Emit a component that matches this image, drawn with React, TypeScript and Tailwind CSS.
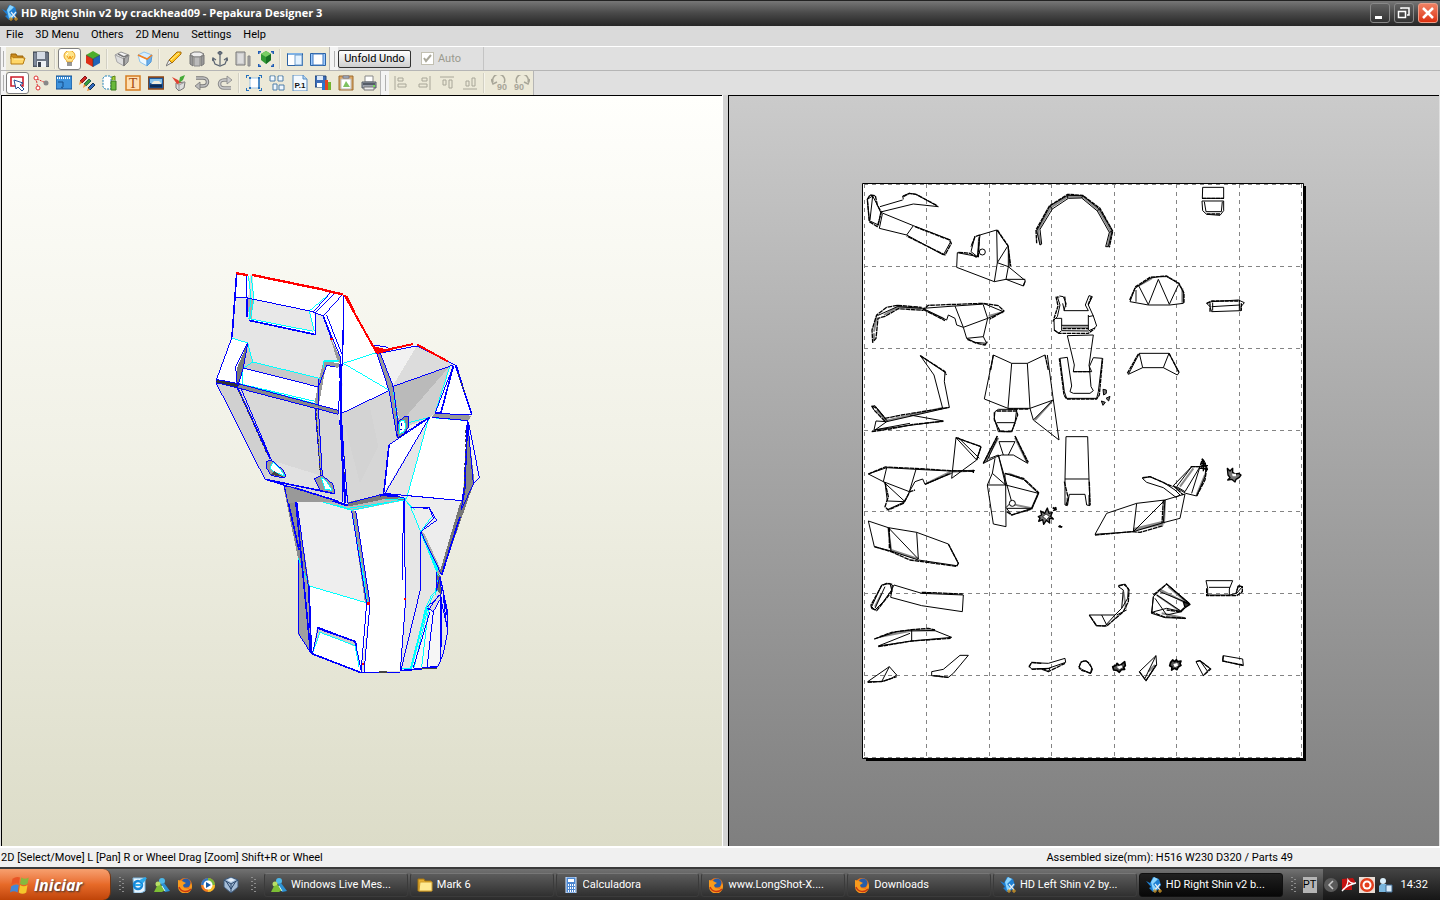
import type { ReactNode } from "react";
import { clsx } from "clsx";

type IconName = keyof typeof ICONS;

const GRAY = "#a8a698";

const ICONS = {
  open: (
    <>
      <path d="M1 3h5l1 2h6v3H1z" fill="#c98a1c" stroke="#9c6508" />
      <path d="M1 13V5l3 2h11l-2 6z" fill="#ffd768" stroke="#b57a10" />
      <path d="M4 8h9" stroke="#fff0b0" />
    </>
  ),
  save: (
    <>
      <path d="M0 1h15l1 2v13H0z" fill="#6b7482" stroke="#39404c" />
      <path d="M4 1h8v7H4z" fill="#d5dce6" />
      <path d="M4 10h9v6H4z" fill="#eef1f5" />
      <path d="M5 11h3v5H5z" fill="#39404c" />
      <path d="M2 2v12" stroke="#95a0b4" />
    </>
  ),
  bulb: (
    <>
      <path d="M5 11c0-2-3-3-3-6a5 5 0 0 1 11 0c0 3-3 4-3 6z" fill="#ffe58a" stroke="#e6a42c" />
      <path d="M5 5l2 3 1-3 1 3 2-3" fill="none" stroke="#ef9c20" />
      <path d="M5 12h5M5 14h5" stroke="#777" strokeWidth="1.4" />
      <path d="M4 4l2-2" stroke="#fff" />
    </>
  ),
  cube: (
    <>
      <path d="M8 0l7 4-7 4-7-4z" fill="#4cae2c" />
      <path d="M1 4l7 4v8l-7-4z" fill="#dd2f17" />
      <path d="M15 4L8 8v8l7-4z" fill="#2265b8" />
      <path d="M1 4l7 4 7-4M8 8v8" fill="none" stroke="#133" strokeWidth=".5" />
    </>
  ),
  foldOff: (
    <>
      <path d="M7 1l8 3-5 4-9-4z" fill="#f5f5f5" stroke="#999" />
      <path d="M1 4l9 4v7l-7-4z" fill="#ddd" stroke="#aaa" />
      <path d="M15 4l-5 4v7l4-4z" fill="#a9a9a9" stroke="#888" />
      <path d="M4 3l6 3 4-2M10 7v8" fill="none" stroke="#777" strokeWidth="1.500" />
    </>
  ),
  foldOn: (
    <>
      <path d="M7 1l8 3-5 4-9-4z" fill="#d3edff" stroke="#8ec5ee" />
      <path d="M1 4l9 4v7l-7-4z" fill="#eef9ff" stroke="#8ec5ee" />
      <path d="M15 4l-5 4v7l4-4z" fill="#6aaeea" stroke="#579ad8" />
      <path d="M1 4l9 4 5-4" fill="none" stroke="#f58220" strokeWidth="1.600" />
    </>
  ),
  cutter: (
    <>
      <path d="M0 15l3-6 4 2z" fill="#eee" stroke="#777" />
      <path d="M3 9l8-8h4v2l-9 9z" fill="#ffc51d" stroke="#a66c0d" />
      <path d="M5 9l8-7" stroke="#fff0a0" />
      <path d="M8 10l6-6" stroke="#c27d08" />
    </>
  ),
  prism: (
    <>
      <path d="M1 3l4-2h6l4 2-4 3H5z" fill="#eee" stroke="#777" />
      <path d="M1 4l3 2v9l-3-2zM12 6l3-2v9l-3 2z" fill="#999" stroke="#777" />
      <path d="M5 6h6v9H5z" fill="#bbb" stroke="#888" />
    </>
  ),
  anchor: (
    <path d="M8 1v13M6 2l2-2 2 2-2 2zM1 8l2 5 5 2 5-2 2-5M0 10l1-3 3 2M12 9l3-2 1 3" fill="none" stroke="#596370" strokeWidth="1.200" />
  ),
  panels: (
    <>
      <path d="M1 1h9v13H1z" fill="#ccc" stroke="#777" />
      <path d="M3 3h5v9H3z" fill="#ddd" />
      <path d="M13 5h2v10h-2z" fill="#aaa" stroke="#888" />
    </>
  ),
  fit3d: (
    <>
      <path d="M0 3V0h3M13 0h3v3M16 13v3h-3M3 16H0v-3" fill="none" stroke="#1f5cb5" strokeWidth="3" />
      <path d="M8 0l5 3v6l-5 4-5-4V3z" fill="#319934" />
      <path d="M8 0l5 3-5 3-5-3z" fill="#79cd64" />
      <path d="M8 6l5-3v6l-5 4z" fill="#187023" />
    </>
  ),
  split: (
    <>
      <path d="M.5 2.500h15v12H.5z" fill="#fff" stroke="#2b62a3" />
      <path d="M1 3h14" stroke="#7fb2e5" strokeWidth="2" />
      <path d="M8 4h7v10H8z" fill="#e3f2ff" stroke="#6f9dcc" />
    </>
  ),
  single: (
    <>
      <path d="M.5 2.500h15v12H.5z" fill="#9ccaff" stroke="#2b62a3" />
      <path d="M3 3h10v11H3z" fill="#fff" stroke="#427ac0" />
    </>
  ),
  select: (
    <>
      <path d="M1 2h12v9H1z" fill="#fff" stroke="#cd1d2b" strokeWidth="1.600" />
      <path d="M4 5l9 3-3 2 4 4-2 2-4-4-2 2z" fill="#fff" stroke="#244d93" />
    </>
  ),
  joint: (
    <>
      <path d="M3 3l2 11M4 4l9 4" stroke="#d33" strokeDasharray="2 1" />
      <circle cx="3" cy="3" r="2" fill="#fff" stroke="#d33" />
      <circle cx="5" cy="13" r="2" fill="#fff" stroke="#d33" />
      <circle cx="13" cy="8" r="2.500" fill="#888" />
    </>
  ),
  measure: (
    <>
      <path d="M0 1h16v13H0z" fill="#3d92dc" stroke="#165192" />
      <path d="M1 3h14" stroke="#fff" strokeWidth="2" strokeDasharray="1 1" />
      <path d="M2 7h5v5M5 12l2 1" fill="none" stroke="#144a86" />
    </>
  ),
  pencils: (
    <>
      <path d="M1 6l5-5 2 2-5 5z" fill="#d02c20" stroke="#812" />
      <path d="M5 9l5-5 2 2-5 5z" fill="#3a9d38" stroke="#265" />
      <path d="M9 13l5-5 2 2-5 5z" fill="#3069bf" stroke="#135" />
      <path d="M1 6l2 2-3 2zM5 9l2 2-3 2zM9 13l2 2-3 1z" fill="#f09030" />
    </>
  ),
  tabs: (
    <>
      <path d="M3 1h6v13H3L1 12V3z" fill="#fff" stroke="#2684b8" strokeDasharray="2 1" />
      <path d="M9 6h5v9H9z" fill="#68b93a" stroke="#39791f" />
      <path d="M10 5V2l3-1v4" fill="#a8d338" stroke="#5b8414" />
    </>
  ),
  text: (
    <>
      <path d="M1 1h14v14H1z" fill="#ffe0b5" stroke="#d57c21" strokeWidth="1.500" />
      <text x="8" y="13" textAnchor="middle" fontFamily="Liberation Serif, serif" fontSize="14" fill="#a64b0b">T</text>
    </>
  ),
  image: (
    <>
      <path d="M0 2h16v12H0z" fill="#1f5a9f" stroke="#93460f" strokeWidth="1.500" />
      <path d="M2 4h12v4H2z" fill="#87c3ec" />
      <path d="M3 9l3-3h5l3 3z" fill="#efebdc" />
      <path d="M2 11h12" stroke="#0c2b55" strokeWidth="3" />
    </>
  ),
  plant: (
    <>
      <path d="M5 8l9-1-1 6-5 3-3-3z" fill="#ddd" stroke="#777" />
      <path d="M5 8l3 2 6-3M8 10v5" fill="none" stroke="#999" />
      <path d="M1 2l6 3 3 3-4 1z" fill="#df4332" />
      <path d="M8 7l1-5 5-2-2 5-4 3z" fill="#45aa38" />
    </>
  ),
  undo: (
    <>
      <path d="M2 3h7a4.500 4 0 0 1 0 8H3" fill="none" stroke="#777" strokeWidth="3.500" />
      <path d="M2 3h7a4.500 4 0 0 1 0 8H4" fill="none" stroke="#c4c4c4" strokeWidth="1.600" />
      <path d="M6 7v8l-5-4z" fill="#bbb" stroke="#777" strokeWidth=".8" />
    </>
  ),
  redo: (
    <>
      <path d="M14 13H7a4.500 4 0 0 1 0-8h5" fill="none" stroke="#888" strokeWidth="3.500" />
      <path d="M14 13H7a4.500 4 0 0 1 0-8h5" fill="none" stroke="#ccc" strokeWidth="1.600" />
      <path d="M10 1v8l5-4z" fill="#ccc" stroke="#888" strokeWidth=".8" />
    </>
  ),
  fit2d: (
    <>
      <path d="M0 3V0h3M13 0h3v3M16 13v3h-3M3 16H0v-3" fill="none" stroke="#2470bd" strokeWidth="2" />
      <path d="M4 3h9v10H4z" fill="#fff" stroke="#9cc3e5" />
      <path d="M13 3v10" stroke="#2470bd" strokeWidth="1.500" />
      <path d="M3 2h2v2H3zM12 2h2v2h-2zM3 12h2v2H3zM12 12h2v2h-2z" fill="#2470bd" />
    </>
  ),
  arrange: (
    <>
      <path d="M1 1h5v5H1zM9 1h5v5H9zM4 9h4v6H4zM10 10h5v5h-5z" fill="#eef7ff" stroke="#4f7ea9" />
      <path d="M2 2h3M10 2h3" stroke="#fff" />
    </>
  ),
  page: (
    <>
      <path d="M1 0h10l4 4v12H1z" fill="#f4faff" stroke="#568bc0" />
      <path d="M11 0v4h4" fill="#b6d7f5" stroke="#568bc0" />
      <text x="8" y="13" textAnchor="middle" fontFamily="Liberation Sans, sans-serif" fontWeight="700" fontSize="8" fill="#111">P.1</text>
    </>
  ),
  export: (
    <>
      <path d="M0 1h11v11H0z" fill="#3c6cb7" stroke="#234779" />
      <path d="M2 1h6v4H2z" fill="#dae8f8" />
      <path d="M2 8h5v4H2z" fill="#fff" />
      <path d="M7 8h3v7H7z" fill="#2878d0" />
      <path d="M10 5h3v10h-3z" fill="#e24520" />
      <path d="M13 7h3v8h-3z" fill="#71b32d" />
    </>
  ),
  clipboard: (
    <>
      <path d="M1 1h14v14H1z" fill="#dba663" stroke="#9d6b2e" />
      <path d="M3 4h10v10H3z" fill="#fff" stroke="#bbb" />
      <path d="M5 1h6v2H5z" fill="#b7c8d6" stroke="#778" />
      <path d="M5 12l3-6 4 6z" fill="#7dc261" />
    </>
  ),
  print: (
    <>
      <path d="M4 1h8v6H4z" fill="#fff" stroke="#888" />
      <path d="M1 7h14v6H1z" fill="#9ca2ac" stroke="#555c66" />
      <path d="M2 9h12" stroke="#555c66" strokeWidth="2" />
      <path d="M3 12h10v3H3z" fill="#eee" stroke="#777" />
      <path d="M12 11h2" stroke="#72dd5a" strokeWidth="2" />
    </>
  ),
  alignL: <path d="M2 1v14M5 3h5v3H5zM5 9h8v3H5z" fill="none" stroke={GRAY} />,
  alignR: <path d="M14 1v14M6 3h5v3H6zM3 9h8v3H3z" fill="none" stroke={GRAY} />,
  alignT: <path d="M1 2h14M4 5h3v5H4zM10 5h3v8h-3z" fill="none" stroke={GRAY} />,
  alignB: <path d="M1 14h14M4 6h3v5H4zM10 3h3v8h-3z" fill="none" stroke={GRAY} />,
  rotL: (
    <>
      <path d="M2 7a6 6 0 1 1 11 1M0 4l2 5 4-2" fill="none" stroke={GRAY} strokeWidth="1.500" />
      <text x="6" y="15" fontFamily="Liberation Sans, sans-serif" fontWeight="700" fontSize="9" fill={GRAY}>90</text>
    </>
  ),
  rotR: (
    <>
      <path d="M14 7A6 6 0 1 0 3 8M16 4l-2 5-4-2" fill="none" stroke={GRAY} strokeWidth="1.500" />
      <text x="0" y="15" fontFamily="Liberation Sans, sans-serif" fontWeight="700" fontSize="9" fill={GRAY}>90</text>
    </>
  ),
  pepakura: (
    <>
      <path d="M0 4l4 2 3-6 6 2 2 6-3 5-5 2-4-4 2-1z" fill="#1e7fd2" />
      <path d="M5 5l3-5 4 2-5 5 4 5-4 1z" fill="#8bd5ff" />
      <path d="M9 7l5 6M14 7l-5 6" stroke="#e4eef5" strokeWidth="1.200" />
      <path d="M8 13h2v2H8zM13 13h2v2h-2z" fill="none" stroke="#d89c27" />
    </>
  ),
  browser: (
    <>
      <path d="M2 1h12v13l-4 2H3z" fill="#e7f5ff" stroke="#7eb7de" />
      <circle cx="7" cy="8" r="4" fill="none" stroke="#1687d8" strokeWidth="2.500" />
      <path d="M4 8h7M9 4l6-3-4 5" fill="none" stroke="#2aa9ed" strokeWidth="2" />
    </>
  ),
  messenger: (
    <>
      <circle cx="8" cy="4" r="3" fill="#4eb8e8" />
      <path d="M7 7l3-1 6 8-5 1z" fill="#2c92d4" />
      <circle cx="4" cy="7" r="2.500" fill="#b7df67" />
      <path d="M0 15l3-6 4-1 4 5-3 2z" fill="#7dbf35" />
      <path d="M8 9l3 5" stroke="#d7f4ff" />
    </>
  ),
  firefox: (
    <>
      <circle cx="8" cy="8" r="7" fill="#ef7413" />
      <circle cx="9" cy="6" r="4.500" fill="#285da8" />
      <path d="M1 3l4 1 4 2-3 2 1 3 5 1 2-6 1 3a7 7 0 0 1-14 1z" fill="#f89b1d" />
      <path d="M2 10c2 5 8 6 12 2" fill="none" stroke="#c83812" strokeWidth="1.500" />
    </>
  ),
  media: (
    <>
      <circle cx="8" cy="8" r="7" fill="#f47f21" />
      <path d="M8 1a7 7 0 0 1 7 7H8z" fill="#75b83b" />
      <path d="M1 8a7 7 0 0 1 7-7v7z" fill="#3276c5" />
      <path d="M15 8a7 7 0 0 1-7 7V8z" fill="#f8bd2c" />
      <circle cx="8" cy="8" r="4.500" fill="#fff" />
      <path d="M6 5l5 3-5 3z" fill="#1659a6" />
    </>
  ),
  vbox: (
    <>
      <path d="M8 0l7 3v7l-7 6-7-6V3z" fill="#a5bdd7" stroke="#3d5877" />
      <path d="M1 3l7 4 7-4M8 7v9M3 4l5 8 5-8" fill="none" stroke="#29466b" />
      <path d="M8 1l4 2-4 2-4-2z" fill="#e4f0fb" />
    </>
  ),
  folder: (
    <>
      <path d="M1 2h6l1 2h6v10H1z" fill="#e6ad2f" stroke="#a67611" />
      <path d="M3 5h12v9H2z" fill="#ffe991" stroke="#cf9c2b" />
    </>
  ),
  calc: (
    <>
      <path d="M3 0h10v16H3z" fill="#4c87d1" stroke="#d5e7ff" />
      <path d="M5 2h6v3H5z" fill="#fff" />
      <path d="M5 8h7M5 11h7M5 14h7" stroke="#fff" strokeWidth="2" strokeDasharray="1 1" />
    </>
  ),
  acrobat: (
    <>
      <path d="M1 2l11-1 3 5-4 2v5H1z" fill="#c51110" />
      <path d="M1 14C6 10 7 6 7 3c2 3 4 4 8 3-5 1-10 3-14 8" fill="none" stroke="#fff" strokeWidth="1.300" />
    </>
  ),
  avira: (
    <>
      <path d="M0 0h16v16H0z" fill="#e9dcd4" />
      <circle cx="8" cy="8" r="7" fill="#e33e1c" />
      <circle cx="8" cy="8" r="4.500" fill="#fff" />
      <circle cx="8" cy="8" r="2.500" fill="#e33e1c" />
    </>
  ),
  buddy: (
    <>
      <circle cx="6" cy="4" r="3" fill="#d9eefa" />
      <path d="M2 15V9l2-2h5l2 3v5z" fill="#79b6de" />
      <path d="M9 8h6v7H9z" fill="#d7ebfa" stroke="#3e6a93" />
    </>
  ),
  windows: (
    <>
      <path d="M2 3q3-2 6-1L7 7Q4 6 1 8z" fill="#e85526" />
      <path d="M9 2q3 2 6 0l-1 5q-3 2-6 0z" fill="#86b93e" />
      <path d="M1 9q3-2 6-1l-1 6q-3-2-6 0z" fill="#4387d8" />
      <path d="M8 8q3 2 6 0l-1 6q-3 2-6 0z" fill="#f5c72b" />
    </>
  ),
} satisfies Record<string, ReactNode>;

function Icon({ name, className }: { name: IconName; className?: string }) {
  return (
    <svg viewBox="0 0 16 16" aria-hidden="true" className={clsx("shrink-0", className ?? "size-4")}>
      {ICONS[name]}
    </svg>
  );
}

type ToolItem = { icon: IconName; label: string; pressed?: boolean; disabled?: boolean } | "sep";

const VIEW_TOOLS: ToolItem[] = [
  { icon: "open", label: "Open" },
  { icon: "save", label: "Save" },
  "sep",
  { icon: "bulb", label: "Light", pressed: true },
  { icon: "cube", label: "Texture" },
  "sep",
  { icon: "foldOff", label: "Show edges" },
  { icon: "foldOn", label: "Specify open edges" },
  "sep",
  { icon: "cutter", label: "Cut" },
  { icon: "prism", label: "Divide faces" },
  { icon: "anchor", label: "Anchor" },
  { icon: "panels", label: "Move view" },
  { icon: "fit3d", label: "Fit 3D view" },
  "sep",
  { icon: "split", label: "Split view" },
  { icon: "single", label: "Single view" },
];

const EDIT_TOOLS: ToolItem[] = [
  { icon: "select", label: "Select and move", pressed: true },
  { icon: "joint", label: "Join faces" },
  { icon: "measure", label: "Rotate part" },
  { icon: "pencils", label: "Line color" },
  { icon: "tabs", label: "Edit flaps" },
  { icon: "text", label: "Add text" },
  { icon: "image", label: "Add image" },
  { icon: "plant", label: "Check part" },
  { icon: "undo", label: "Undo" },
  { icon: "redo", label: "Redo" },
  "sep",
  { icon: "fit2d", label: "Fit 2D view" },
  { icon: "arrange", label: "Arrange parts" },
  { icon: "page", label: "Page setup" },
  { icon: "export", label: "Export" },
  { icon: "clipboard", label: "Copy" },
  { icon: "print", label: "Print" },
];

const ALIGN_TOOLS: ToolItem[] = [
  { icon: "alignL", label: "Align left", disabled: true },
  { icon: "alignR", label: "Align right", disabled: true },
  { icon: "alignT", label: "Align top", disabled: true },
  { icon: "alignB", label: "Align bottom", disabled: true },
  "sep",
  { icon: "rotL", label: "Rotate left", disabled: true },
  { icon: "rotR", label: "Rotate right", disabled: true },
];

function Tools({ items }: { items: ToolItem[] }) {
  return (
    <div className="flex h-full items-center bg-[#ece9d8]">
      {items.map((item, i) =>
        item === "sep" ? (
          <div key={i} className="mx-[2px] h-5 w-[2px] border-l border-[#d2d0c4] bg-[#f6f4ea]" />
        ) : (
          <button
            key={item.label}
            aria-label={item.label}
            disabled={item.disabled}
            className={clsx(
              "flex h-[22px] w-[23px] items-center justify-center rounded-[3px] border",
              item.pressed ? "border-[#808080] bg-white" : "border-transparent",
            )}
          >
            <Icon name={item.icon} />
          </button>
        ),
      )}
    </div>
  );
}

function Grip({ first }: { first?: boolean }) {
  return (
    <div
      className={clsx(
        "flex h-full shrink-0 items-center justify-center border-l border-[#b5b5b5] bg-[#f4f4f4]",
        first ? "w-[6px]" : "w-[9px]",
      )}
    >
      <div className="h-4 w-px bg-[#b0b0b0]" />
    </div>
  );
}

/* Each model section is plotted on its own 3x grid. */
const THIRD = "scale(.333333)";

function Leg() {
  return (
    <g transform={`translate(275 480) ${THIRD}`} fill="none" strokeWidth="3">
      <path d="M25 20L62 40 105 320 108 520 68 460 70 240z" fill="#8c8c8c" />
      <path d="M70 240L105 320 108 520 68 460z" fill="#a0a0a0" />
      <path d="M62 40L230 90 285 370 258 578 110 522 103 318z" fill="#fff" />
      <path d="M62 40L230 90 278 370 103 318z" fill="#eeeeee" />
      <path d="M232 92L388 60 392 358 378 572 265 578 285 370z" fill="#fff" />
      <path d="M388 60L400 50 437 155 438 325 380 570 392 358z" fill="#e6e6e6" />
      <path d="M395 50L562 62 500 285 490 265 437 155z" fill="#ededed" />
      <path d="M437 155L490 270 485 300 519 400 519 450 505 520 490 558 378 572 438 325z" fill="#e5e5e5" />
      <path d="M470 370L500 345 495 540 485 558 410 566z" fill="#f6f6f6" />
      <path d="M230 92L244 95 285 370 270 370z" fill="#999" />
      <path d="M30 20L215 75 385 46 385 62 235 92 65 43z" fill="#bbb" />
      <path d="M126 442L240 484 255 565 240 500 135 455 112 522z" fill="#ccc" />
      <path d="M437 155L447 158 500 275 490 288z" fill="#aaa" />
      <path d="M555 70L598 5 500 285 493 280z" fill="#777" />
      <path d="M484 275L498 290 498 345 484 330z" fill="#666" />
      <path d="M455 383L490 335 500 350 475 395z" fill="#ddd" />
      <path
        stroke="#00ffff"
        d="M50 28L65 43 230 91 370 62M70 235L103 318 280 370M135 457L240 497 252 560M135 457L112 522M230 92L278 370M250 210L270 310M388 55L407 82 437 155 490 288M470 110L437 155M490 330L470 345 450 390 410 565 378 565M475 345L458 385 418 560M460 390L440 562M487 300L480 345"
      />
      <path d="M439 160L489 272M455 380L408 565" stroke="#00ffff" strokeWidth="6" />
      <path
        stroke="#0000ff"
        d="M-30 -2L25 15 215 78 340 45 388 56M62 40L100 318 108 520M70 240V460L108 520M230 92L275 370 258 578M242 92L285 370 267 578M103 318L110 522M112 522L130 442 240 484 260 578M388 60V160L392 358 376 572M384 160V300M407 82H462L485 121 437 155 500 285M462 82L475 115 442 151M437 155V325L378 570M340 42L562 62M484 275V332L495 290 519 400V450L505 520 490 558 375 572M495 290L500 340 455 383 475 395 500 350M495 345L518 450M465 395L415 563M475 395L456 565M498 350V540M500 310L518 415M505 350L515 440M460 390L492 345"
      />
      <path
        stroke="#0000ff"
        strokeWidth="5"
        d="M28 15L72 210M60 38L107 520M30 14L215 75 370 45 395 55M108 520L258 578H375M126 444L240 484 245 500M388 60V160M378 572L485 562M500 285L555 110M500 350V500"
      />
      <path d="M312 577H335M438 566H485" stroke="#444" strokeWidth="5" />
      <path d="M275 366h10v8h-10zM386 355h8v6h-8zM262 550h5v6h-5z" fill="red" />
    </g>
  );
}

function KneeFront() {
  return (
    <g transform={`translate(205 262) ${THIRD}`} fill="none" strokeWidth="3">
      <path d="M33 357L95 377 400 455 425 720 180 652z" fill="#d8d8d8" />
      <path d="M33 362L95 377 202 600 180 652z" fill="#d0d0d0" />
      <path d="M215 600L345 640 350 690 235 660z" fill="#e1e1e1" />
      <path d="M95 30L420 100 410 455 33 357 80 228z" fill="#fff" />
      <path d="M94 107L128 110 132 175 332 220 328 150 355 162 405 290V302L358 296 345 350 143 300 128 243 80 228z" fill="#e5e5e5" />
      <path d="M128 108L315 147 328 208 134 172z" fill="#e8e8e8" />
      <path d="M128 108L145 112 140 170 132 174z" fill="#aaa" />
      <path d="M134 40H145L145 108 130 108z" fill="#ddd" />
      <path d="M80 228L128 243 95 370 33 357z" fill="#fff" />
      <path d="M128 243L118 315 98 375 92 360 97 315z" fill="#777" />
      <path d="M128 243L143 300 347 350 340 375 115 318z" fill="#c9c9c9" />
      <path d="M115 320L340 375 332 435 100 368z" fill="#fff" />
      <path d="M356 295L403 305 400 318 363 310 340 438 328 430 340 360z" fill="#999" />
      <path d="M33 352L100 365 400 445V457L95 377 33 362z" fill="#888" />
      <path d="M33 352L105 367 95 377 33 362z" fill="#333" />
      <path d="M375 225L408 290V305L398 300z" fill="#999" />
      <path d="M330 435H340L352 640H345z" fill="#aaa" />
      <path d="M240 675H272L400 718 250 722z" fill="#999" />
      <path
        stroke="#00ffff"
        d="M130 42L138 102 132 170 325 208M138 42L147 108 137 168M313 148L328 208M380 90L313 147M80 228L128 243 143 300 348 350M143 300L113 320V368L332 425M103 365L330 418M356 317V296H402M356 300H400M415 305L450 290"
      />
      <path
        stroke="#0000ff"
        d="M95 30L80 228 33 357M94 107H128M125 40L127 165M128 108L315 147M315 147L325 150M380 88L325 150 355 162 412 98 420 103 412 300M388 95L332 150M128 243L92 315 97 370M128 243L115 318 98 375M115 318L340 375M33 352L100 365 400 445M33 362L95 377 400 457M33 362L180 652 400 718M108 380L202 600M340 430V375L365 310 390 315M340 350V430M355 162L408 290V300M365 160L412 280M408 300L400 455M330 438L347 640M340 438L352 640M404 305L414 720M412 455L427 720"
      />
      <path
        stroke="#0000ff"
        strokeWidth="5"
        d="M95 35L88 130 81 225M127 110V165M132 175L332 218V150M355 162L380 230M410 305V455M98 378L195 590M180 652L390 695M270 678L400 718"
      />
      <path d="M102 388L187 578M333 440L346 638M407 460L422 715" stroke="#444" strokeDasharray="8 5" />
      <path d="M185 598L200 595 235 625 243 642 235 648 198 640 185 618z" fill="#999" stroke="#0000ff" />
      <path d="M205 600L228 625 240 642 208 630 195 618z" fill="#fff" stroke="#00ffff" />
      <path d="M198 638L208 628 235 645z" fill="#444" />
      <path d="M328 650L350 640 383 665 390 695 345 685z" fill="#999" stroke="#0000ff" />
      <path d="M348 645L362 655 382 685 360 682z" fill="#fff" stroke="#00ffff" />
      <path d="M92 33L130 40M142 39L350 82 380 90 415 97" stroke="red" strokeWidth="7" />
      <path d="M424 103L450 152M375 230h10" stroke="red" strokeWidth="6" />
    </g>
  );
}

function KneeSide() {
  return (
    <g transform={`translate(335 330) ${THIRD}`} fill="none" strokeWidth="3">
      <path d="M28 -105L125 68 165 182 20 250 25 90z" fill="#fff" />
      <path d="M20 250L162 182 190 325 162 345 145 490 38 520z" fill="#d6d6d6" />
      <path d="M20 250L100 210 130 350 75 460z" fill="#d3d3d3" />
      <path d="M132 70L245 48 172 168z" fill="#f1f1f1" />
      <path d="M245 48L355 105 172 170z" fill="#dcdcdc" />
      <path d="M172 170L345 108 195 280z" fill="#bababa" />
      <path d="M345 108L300 250 285 262 190 300 195 280z" fill="#cfcfcf" />
      <path d="M125 68L136 70 175 168 195 290 185 325 162 182z" fill="#999" />
      <path d="M358 105L410 255 300 250z" fill="#fff" />
      <path d="M300 250L410 257 400 272 290 262z" fill="#999" />
      <path d="M285 262L398 272 382 512 145 490 162 345z" fill="#fff" />
      <path d="M280 268L215 505 145 490z" fill="#e6e6e6" />
      <path d="M400 275L433 442 418 460z" fill="#f2f2ec" />
      <path d="M398 272L418 455 378 540 385 480z" fill="#858585" />
      <path d="M38 517L145 492 210 505 205 513 150 507 38 530z" fill="#777" />
      <path
        stroke="#00ffff"
        d="M25 100L125 68M25 100L165 182M175 170L190 285 285 262M280 268L215 505 150 510M345 108L300 250M290 263L400 272M175 180L188 280M0 525L38 535 210 510 240 540"
      />
      <path
        stroke="#0000ff"
        d="M27 -105L17 250M20 250L162 182M125 68L162 182 187 325M135 68L175 170 190 290M172 170L355 105M132 70L245 48 365 108 410 255 300 250 355 108M285 262L162 345 145 490M280 268L150 490M285 262L190 320M290 262L398 272 385 510M400 275L433 442 415 460 398 272M17 250L38 520M20 250L28 520M145 490L382 512M135 500L150 490 210 505V540M230 532L280 535M38 520L145 492 190 498M115 45L158 52M418 457L378 540M385 480L380 535"
      />
      <path
        stroke="#0000ff"
        strokeWidth="5"
        d="M355 108L318 248M362 108L410 252M162 345L147 485M397 285L389 480L382 512M300 248H320M15 270L32 520M135 495L190 500M285 262L245 285"
      />
      <path d="M368 130L390 190M392 300L388 490" stroke="#444" strokeDasharray="8 6" />
      <path d="M190 275L208 260H221V290L205 315 190 325 185 310z" fill="#888" stroke="#0000ff" />
      <path d="M194 275L208 270 213 290 205 308 192 310z" fill="#fff" stroke="#00ffff" />
      <path d="M200 280v8M194 298h6M190 323l30-20" stroke="#0000cc" />
      <path d="M28 -105L88 2 125 68M120 67L235 42M245 43L340 95" stroke="red" strokeWidth="6" />
      <path d="M115 48L155 58 210 48 135 70 127 72z" fill="red" />
    </g>
  );
}

const INK = "#000";
const FLAP = "#8a8a8a";

function Parts() {
  return (
    <g fill="none" strokeLinejoin="round">
      <g transform={`translate(860 180) ${THIRD}`}>
        <path stroke={FLAP} strokeWidth="6" d="M72 405L115 380 185 386M42 455L50 412M190 388L250 415M386 408L430 396M42 460V480M357 175L354 220" />
        <path
          stroke={INK}
          strokeWidth="3"
          d="M60 80L128 60M130 58L128 48 148 40 168 43 235 80 160 72 62 96M22 58L38 48 52 75 62 97 55 135 28 122zM38 48L30 120M62 97L160 137 272 180M67 102L58 145 140 165 160 137M140 165L250 225 272 185M292 218L355 230M292 218L290 262 403 305 438 298 490 318 496 302 445 260 412 248 403 305M360 165L410 150 445 200 450 258M410 150L412 248 442 200M445 200L445 260 438 298H496M345 168L333 215 352 230 360 165M188 385L285 378 375 372 430 395 383 415 310 442 285 378M370 375L383 415 370 470 320 475 310 442M188 385L260 420 265 405 285 415 290 435 310 442M370 470L380 490 345 487 320 475M52 407L112 380 188 385"
        />
        <path
          stroke={INK}
          strokeWidth="4"
          strokeDasharray="14 2"
          d="M22 58L30 45 46 47 52 75 64 97 52 140 28 125zM130 50L148 40 168 43 230 76M165 140L268 180 274 190 255 225 140 168M295 217L330 220 350 232M355 232L358 165 345 170 333 200M412 150L444 197 452 258M490 318L496 302M112 376L80 382 50 405 36 450 38 487 48 475 54 415 75 409 115 386 188 391 205 376 370 370 415 377 432 393 388 418M190 388L255 422M322 478L350 490 375 495 382 485M112 376L185 382"
        />
        <circle cx="367" cy="216" r="9" stroke={INK} strokeWidth="3" />
      </g>
      <g transform={`translate(1020 180) ${THIRD}`}>
        <path stroke={FLAP} strokeWidth="6" d="M62 195L54 150 93 82 143 50H188L236 90 273 155 262 200M128 442H205M348 330V365M487 325V368M360 315L395 295" />
        <path
          stroke={INK}
          strokeWidth="3"
          d="M60 195L50 152 90 78 143 46 188 47 238 87 277 153 265 200 257 200 268 157 232 93 185 54 145 55 97 87 60 148 65 192zM90 78L97 87M143 46V55M188 47L185 54M238 87L232 93M277 153L268 157M548 22H611V55H547zM546 63H611V92L600 106 560 103 548 92zM553 65L558 95H604L607 65M118 352L112 350 120 375 112 410 102 420 103 450 115 460 125 452 205 453 222 445 230 438 220 408 205 375 217 350 207 347 196 375 205 392H132L138 370 130 350 118 348M128 370L133 392M125 415V450M108 415H125M125 436H205M205 405V450M205 410L220 407M142 467L220 465 207 557 215 575H160L163 555zM120 535L142 532 155 618 150 635 160 640H210L220 632 213 620 208 560 220 533 247 535 235 635 230 655H140L133 635zM330 365L345 325 390 295 415 290 440 290 475 310 490 335V370L450 375H385zM355 315L385 374 415 298 448 373 475 315M358 520H447L477 578 472 585 430 563H368L325 583zM358 520L368 563M447 520L430 563M560 370L575 365 655 360 673 368 663 380V392L575 395 570 380zM575 380L660 375M578 368V392M658 360V392"
        />
        <path
          stroke={INK}
          strokeWidth="4"
          strokeDasharray="12 2"
          d="M50 190L48 150 88 78 143 43 188 46 240 85 278 153 268 202M102 450L118 460H205L225 445M108 350L114 378 99 425M134 350L138 380M214 350L204 375M118 535L132 645 140 657H230L238 645 248 535M329 360L347 320 390 292 440 288 477 310 492 340V370M322 580L355 522M447 520L477 577M128 446H205M160 575H210M560 102H602M560 370L575 363H660M664 370V392M570 370V395M546 55H612"
        />
        <path d="M249 628l10 2v10l-8 5zM258 655l12-6-4 14zM244 663l12 4-7 9z" stroke={INK} fill="#777" strokeWidth="3" />
      </g>
      <g transform={`translate(860 345) ${THIRD}`}>
        <path stroke={FLAP} strokeWidth="6" d="M50 195L78 227 250 188M200 415L272 380 340 377M460 478L515 490 535 445M525 225L575 170M445 385L490 403M375 350L415 278M465 278L500 350" />
        <path
          stroke={INK}
          strokeWidth="3"
          d="M181 32L255 82 253 110 268 187 80 230 45 255 250 228 150 210M181 32L222 90 248 190M80 230L48 228 42 255 150 235M35 185L45 182 82 228M400 30L455 55H502L555 30M400 30L373 162 444 190H510L502 55M455 55L444 190M562 30L580 165 597 285 520 225 510 190 580 165 520 225M405 200L415 193H470L465 235 455 260H415L403 220zM410 233H465M288 278L363 305 350 345 275 400zM288 278L350 345M295 278L358 340M25 387L80 368 168 373 268 378 345 377M25 387L70 410 148 440 165 410 188 402 195 418 275 385M80 368L70 410 135 470 80 495M168 373L148 440 135 470 82 468 75 412M412 273L370 355 410 335 425 330H460L503 355 465 273M417 290H465L445 330M417 290L430 330M412 280L380 350M390 340L415 330 437 420 382 420 397 385 405 340M397 385L437 420 438 545 400 537 382 420M415 330L455 470 438 488M435 385L490 403 535 445 515 490 455 510 440 490M437 420L535 445M435 385V420M440 490L515 490"
        />
        <path
          stroke={INK}
          strokeWidth="4"
          strokeDasharray="14 2"
          d="M181 32L255 80 259 90M75 220L125 210 268 187M38 183L50 190 78 223M35 260L90 252 160 238 250 229M35 182L42 195 76 230M400 30L392 75M555 30L565 75M410 198H470L473 210 455 260 420 259 403 225V200M445 192H505M288 278L363 305 350 345M25 387L75 366 165 370 270 377 342 379M75 412L85 455 75 485 85 495 130 475 150 440 165 435M195 418L270 385M412 273L370 355M465 273L505 352M435 385L490 400 536 443 515 492 455 510 440 500M340 374V384"
        />
        <circle cx="457" cy="475" r="9" fill="#fff" stroke={INK} strokeWidth="3" />
        <path d="M535 515l10-5-3-12 12 7 8-16 5 16 10-3-5 12 8 8-12-2 1 14-10-8-8 12-3-14-12 5 4-10z" fill="#777" stroke={INK} strokeWidth="4" />
        <path d="M548 515l10-8 10 7-8 10z" fill="#fff" stroke={INK} strokeWidth="2" />
        <path d="M578 488l10 8M580 498l8-12" stroke={INK} strokeWidth="4" />
      </g>
      <g transform={`translate(980 425) ${THIRD}`}>
        <path stroke={FLAP} strokeWidth="6" d="M460 315L550 297M555 225L552 295M650 210L675 150M262 218V240M327 210V240M460 312L550 290M600 185L640 130" />
        <path
          stroke={INK}
          strokeWidth="3"
          d="M258 35H323L327 162 330 242 320 240 315 208H268L262 242 255 240V162zM255 162H327M345 328L380 265 470 235 555 225 615 207 600 280 550 293 460 320zM470 235L460 320 555 225 550 293M487 160L510 155 550 172 585 195 600 210 588 217 550 188 500 172zM580 182L635 125 678 125 675 155 650 213 617 205zM635 125L590 185 615 200 660 125 635 205M668 102L665 130 683 135 673 108z"
        />
        <path stroke={INK} strokeWidth="4" strokeDasharray="14 2" d="M345 330L455 320 480 322 550 302M487 158L510 155 578 185M632 125H660L667 102 680 130 675 165 650 213M253 170L265 220 258 240M328 170L330 240M550 225L546 295M580 182L610 210" />
        <path d="M662 115h16M664 122h20M660 130h22M670 105v34" stroke={INK} strokeWidth="4" />
        <path d="M742 130l8 8 8-8v12l8 5 10-2 7 5-5 7-10 6-3 8-10-8-12 2 7-7-6-8z" fill="#777" stroke={INK} strokeWidth="4" />
        <path d="M756 146h12v8h-10z" fill="#fff" />
        <path d="M220 247l10 8M223 257l6-9M236 303l10 4" stroke={INK} strokeWidth="4" />
      </g>
      <g transform={`translate(860 515) ${THIRD}`}>
        <path stroke={FLAP} strokeWidth="6" d="M85 38L93 105 175 132M60 365L150 348 225 346M45 275L65 235M905 295L975 310M925 215L980 262M790 230L798 280M865 470L885 450M890 240L960 288M902 225L980 265" />
        <path
          stroke={INK}
          strokeWidth="3"
          d="M25 18L85 38 170 52 265 87 295 145 290 152 175 135 93 108 43 95zM85 38L93 108M85 38L175 132 170 52M35 275L65 210 90 205 95 225 70 260 45 285zM75 215L45 280M97 220L102 210 185 235 310 240 307 290 185 272 92 247zM43 372L110 350 155 345 225 347 275 367 155 378 55 393 150 355M155 345V378M23 500L88 455 110 480 95 490 65 500zM88 455L65 500M215 470L250 463 300 421H325L280 475 265 487 215 482zM507 453L515 443 565 445 615 430 617 442 565 460 515 462zM545 463L570 460 565 470zM657 455L665 440 680 438 695 458 692 475 665 463zM838 470L888 422 890 450 858 497zM888 422L855 490M1008 440L1020 437 1050 460 1030 482zM1020 437L1042 468M1090 422L1148 432 1150 452 1088 438zM688 300L765 300 785 280 803 250 805 220 790 208 775 215 790 225 785 280M688 300L708 332 735 333 765 300M725 300L740 330M770 300L800 285M880 245L920 207 988 265 965 290 920 280 882 290 875 295zM890 240L965 290M900 230L985 265M920 207L980 260M885 250L920 300 965 290M880 245L875 295 915 308 975 310M1038 197H1118L1108 222V240H1043V220zM1047 217H1110M1110 240L1130 235 1147 215 1135 212 1130 228"
        />
        <path
          stroke={INK}
          strokeWidth="4"
          strokeDasharray="14 2"
          d="M43 95L93 110 150 135 290 154 295 145 265 87M35 280L33 270 65 212 80 205 97 208 95 230 65 268 50 287 35 280M185 232L308 237M43 372L95 352 155 344 205 340 225 345M55 395L155 378 272 370M23 502L70 499 110 485M507 457L515 442 545 445M515 463L550 461 565 470 615 445M657 458L662 442 675 436 688 445 697 462 692 475 665 466 657 458M838 470L858 497 888 450M1008 440L1020 437 1052 462 1030 482M1090 422L1088 438 1148 450M775 212L795 208 807 225 805 260 790 290 740 333 710 332 688 300M880 240L920 207 987 265 960 290 920 285M873 290L910 305 978 310M1040 220V242H1130L1147 230V215L1135 213 1128 235M88 38V100M265 487L220 482"
        />
        <path d="M758 455l10-4 3-6 8 7 15-12 2 12-5 5 3 6-10 1-6 8-7-6-10-1zM932 442l6-7 6 5 5-6 4 6 10-2-3 8 3 5-8 5-4 8-8-4-8 5 1-9-7-4z" fill="#555" stroke={INK} strokeWidth="5" />
        <path d="M770 455l14-4 4 6-10 6zM940 447l12-3 2 8-10 5z" fill="#fff" />
        <path d="M595 35h12M600 30v8M970 260l20 8-15 10z" fill="#333" stroke={INK} strokeWidth="4" />
      </g>
    </g>
  );
}

function ModelView() {
  return (
    <section aria-label="3D view" className="min-w-0 flex-[721] border-t border-l border-black bg-linear-to-b from-[#fffffc] via-[#f0f0e5] via-50% to-[#dcdcc8]">
      <svg viewBox="2 96 720 750" shapeRendering="crispEdges" className="h-full w-full">
        <Leg />
        <KneeFront />
        <KneeSide />
      </svg>
    </section>
  );
}

const GRID_X = [864, 926, 989, 1051, 1114, 1176, 1239, 1301];
const GRID_Y = [184, 266, 348, 430, 511, 593, 675, 757];

function PatternView() {
  return (
    <section aria-label="2D pattern" className="min-w-0 flex-[711] border-t border-l border-black bg-linear-to-b from-[#cbcbcb] to-[#7f7f7f]">
      <svg viewBox="729 96 710 750" className="h-full w-full">
        <path d="M866 186h440v575H866z" fill="#000" />
        <path d="M862.500 183.500h441v575h-441z" fill="#fff" stroke="#000" />
        <g stroke="#848484" strokeDasharray="4 4" shapeRendering="crispEdges">
          {GRID_X.map((x) => (
            <path key={x} d={`M${x + 0.5} 184V758`} />
          ))}
          {GRID_Y.map((y) => (
            <path key={y} d={`M864 ${y + 0.5}H1302`} />
          ))}
        </g>
        <Parts />
      </svg>
    </section>
  );
}

const WINDOW_BUTTON = "flex h-5 w-5 items-center justify-center rounded-[3px] border";

function TitleBar() {
  return (
    <header className="flex h-[26px] shrink-0 items-center border-t border-[#222] bg-linear-to-b from-[#777] via-[#484848] via-50% to-[#262626] pr-[2px] pb-[2px] pl-[2px]">
      <Icon name="pepakura" />
      <h1 className="ml-[3px] flex-1 truncate font-['Open_Sans','Noto_Sans',sans-serif] text-[11px] font-bold text-white">
        HD Right Shin v2 by crackhead09 - Pepakura Designer 3
      </h1>
      <div className="flex gap-1">
        <button aria-label="Minimize" className={clsx(WINDOW_BUTTON, "border-[#888] bg-linear-to-b from-[#626262] to-[#333]")}>
          <svg viewBox="0 0 16 16" className="size-4"><path d="M3 11h7v3H3z" fill="#fff" /></svg>
        </button>
        <button aria-label="Restore" className={clsx(WINDOW_BUTTON, "border-[#888] bg-linear-to-b from-[#626262] to-[#333]")}>
          <svg viewBox="0 0 16 16" className="size-4" fill="none" stroke="#fff" strokeWidth="1.500"><path d="M2.500 6.500h7v6h-7zM5 4V3h8v7h-2" /></svg>
        </button>
        <button aria-label="Close" className={clsx(WINDOW_BUTTON, "border-[#ef9d88] bg-linear-to-b from-[#f08062] to-[#dc2d0a]")}>
          <svg viewBox="0 0 16 16" className="size-4"><path d="M3 3l10 10M13 3L3 13" stroke="#fff" strokeWidth="2.500" /></svg>
        </button>
      </div>
    </header>
  );
}

const MENUS = ["File", "3D Menu", "Others", "2D Menu", "Settings", "Help"];

const TASKS: { icon: IconName; title: string; active?: boolean }[] = [
  { icon: "messenger", title: "Windows Live Mes..." },
  { icon: "folder", title: "Mark 6" },
  { icon: "calc", title: "Calculadora" },
  { icon: "firefox", title: "www.LongShot-X...." },
  { icon: "firefox", title: "Downloads" },
  { icon: "pepakura", title: "HD Left Shin v2 by..." },
  { icon: "pepakura", title: "HD Right Shin v2 b...", active: true },
];

const QUICK_LAUNCH: { icon: IconName; label: string }[] = [
  { icon: "browser", label: "Internet Explorer" },
  { icon: "messenger", label: "Messenger" },
  { icon: "firefox", label: "Firefox" },
  { icon: "media", label: "Media Player" },
  { icon: "vbox", label: "VirtualBox" },
];

function TaskGrip() {
  return (
    <svg viewBox="0 0 6 20" aria-hidden="true" className="h-5 w-[6px] shrink-0">
      <path d="M1 2v16M4 4v16" stroke="#8c8c8c" strokeDasharray="1 3" strokeWidth="2" />
    </svg>
  );
}

function Taskbar() {
  return (
    <footer className="flex h-[33px] shrink-0 items-center border-t-2 border-[#3a3a3a] bg-linear-to-b from-[#727272] via-[#484848] via-50% to-[#2b2b2b] text-[11px] text-white">
      <button className="flex h-full w-[111px] shrink-0 items-center gap-1 rounded-r-lg border-r border-[#6f3513] bg-linear-to-b from-[#f7a06f] via-[#e76a28] via-50% to-[#bf4407] pl-[10px] font-['Open_Sans','Noto_Sans',sans-serif] text-base font-bold italic [text-shadow:1px_1px_2px_#333]">
        <Icon name="windows" className="size-5" />
        Iniciar
      </button>
      <div className="flex shrink-0 items-center pl-2">
        <TaskGrip />
        <div className="flex gap-[7px] px-[6px]">
          {QUICK_LAUNCH.map((q) => (
            <button key={q.label} aria-label={q.label}>
              <Icon name={q.icon} />
            </button>
          ))}
        </div>
        <div className="ml-[6px]">
          <TaskGrip />
        </div>
      </div>
      <nav aria-label="Open windows" className="ml-[7px] flex min-w-0 flex-1 gap-[2px]">
        {TASKS.map((t) => (
          <button
            key={t.title}
            className={clsx(
              "flex h-6 min-w-0 flex-1 items-center gap-1 rounded-[3px] border px-[6px]",
              t.active
                ? "border-[#111] bg-linear-to-b from-[#202020] to-[#080808]"
                : "border-[#3b3b3b] border-t-[#777] bg-linear-to-b from-[#5c5c5c] via-[#464646] via-50% to-[#303030]",
            )}
          >
            <Icon name={t.icon} />
            <span className="truncate">{t.title}</span>
          </button>
        ))}
      </nav>
      <div className="flex h-full shrink-0 items-center pl-2">
        <TaskGrip />
        <span className="mx-[6px] flex h-4 w-[14px] items-center justify-center bg-[#b5b5b5] text-black">PT</span>
        <div className="flex h-full items-center gap-[2px] bg-linear-to-b from-[#444] to-[#161616] pr-3">
          <button aria-label="Show hidden icons">
            <svg viewBox="0 0 16 16" className="size-4"><circle cx="8" cy="8" r="7" fill="#5a5a5a" /><path d="M10 4L6 8l4 4" fill="none" stroke="#ccc" strokeWidth="1.500" /></svg>
          </button>
          <Icon name="acrobat" />
          <Icon name="avira" />
          <Icon name="buddy" />
          <time className="ml-[6px]">14:32</time>
        </div>
      </div>
    </footer>
  );
}

export default function App() {
  return (
    <div className="flex h-screen flex-col overflow-hidden bg-[#e0e0e0] font-[Roboto,'Noto_Sans',sans-serif] text-[11px] leading-4 text-black">
      <TitleBar />
      <nav aria-label="Menu" className="flex h-5 shrink-0 items-center bg-[#dadada] pb-[2px]">
        {MENUS.map((m) => (
          <button key={m} className="px-[6px]">{m}</button>
        ))}
      </nav>

      {/* Toolbars */}
      <div className="flex h-[25px] shrink-0 border-t border-b border-t-white border-b-[#b5b5b5]">
        <Grip first />
        <Tools items={VIEW_TOOLS} />
        <Grip />
        <div className="flex w-[146px] items-center border-r border-[#c4c4c4]">
          <button className="h-[18px] w-[73px] shrink-0 rounded-[2px] border border-[#333] bg-linear-to-b from-white to-[#cfcfcf] leading-4 whitespace-nowrap">
            Unfold Undo
          </button>
          <label className="ml-[10px] flex items-center gap-1 text-[#9a9a8e]">
            <span className="relative flex size-[13px]">
              <input type="checkbox" defaultChecked disabled className="size-[13px] appearance-none border border-[#c2c0b2] bg-white" />
              <svg viewBox="0 0 13 13" className="pointer-events-none absolute inset-0"><path d="M3 6l2 3 5-6" fill="none" stroke="#aaa89b" strokeWidth="2" /></svg>
            </span>
            Auto
          </label>
        </div>
      </div>
      <div className="flex h-6 shrink-0">
        <Grip first />
        <Tools items={EDIT_TOOLS} />
        <Grip />
        <Tools items={ALIGN_TOOLS} />
        <div className="w-px bg-[#b5b5b5]" />
      </div>

      {/* Views */}
      <main className="flex min-h-0 flex-1 pr-[1px] pl-[1px]">
        <ModelView />
        <div className="w-[6px] shrink-0 border-l border-white bg-[#d4d4d4]" />
        <PatternView />
      </main>

      <div className="flex h-[21px] shrink-0 items-center justify-between border-t-2 border-white bg-[#f0f0f0] pl-[1px] pr-[147px]">
        <span>2D [Select/Move] L [Pan] R or Wheel Drag [Zoom] Shift+R or Wheel</span>
        <span>Assembled size(mm): H516 W230 D320 / Parts 49</span>
      </div>
      <Taskbar />
    </div>
  );
}
